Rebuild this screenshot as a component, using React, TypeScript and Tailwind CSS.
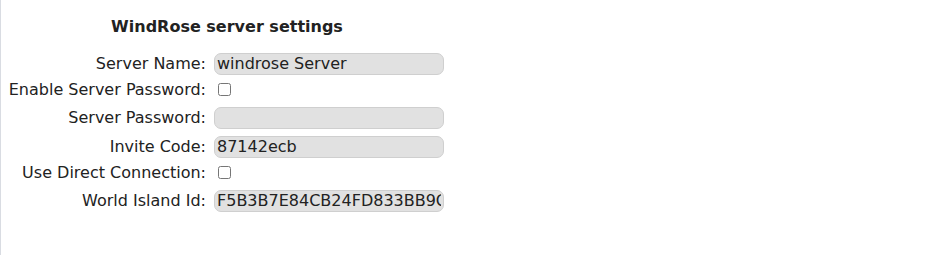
export default function App() {
  const rows: { label: string; type: 'text' | 'check'; value?: string }[] = [
    { label: 'Server Name:', type: 'text', value: 'windrose Server' },
    { label: 'Enable Server Password:', type: 'check' },
    { label: 'Server Password:', type: 'text', value: '' },
    { label: 'Invite Code:', type: 'text', value: '87142ecb' },
    { label: 'Use Direct Connection:', type: 'check' },
    { label: 'World Island Id:', type: 'text', value: 'F5B3B7E84CB24FD833BB9C0E1A2' },
  ]

  return (
    <div
      className="h-[255px] w-[940px] border-l border-[#d9dce2] bg-white text-[16px] text-[#222]"
      style={{ fontFamily: '"DejaVu Sans", sans-serif' }}
    >
      <div className="w-[444px] pt-[17px]">
        <h2 className="pl-[8px] text-center text-[16px] font-bold leading-[20px] text-[#222]">
          WindRose server settings
        </h2>
        <div className="mt-[12px] grid grid-cols-[205px_230px] gap-x-2">
          {rows.map((row) =>
            row.type === 'text' ? (
              <div key={row.label} className="contents">
                <label className="flex h-[29px] items-center justify-end whitespace-nowrap">
                  {row.label}
                </label>
                <div className="flex h-[29px] items-center">
                  <input
                    type="text"
                    readOnly
                    value={row.value}
                    className="h-[22px] w-[230px] rounded-[7px] border border-[#cfcfcf] bg-[#e1e1e1] px-[2px] text-[16px] leading-[20px] text-[#222] outline-none"
                    style={{ fontFamily: '"DejaVu Sans", sans-serif' }}
                  />
                </div>
              </div>
            ) : (
              <div key={row.label} className="contents">
                <label className="flex h-[25px] items-start justify-end whitespace-nowrap pt-[2px] leading-[19px]">
                  {row.label}
                </label>
                <div className="flex h-[25px] items-start">
                  <input type="checkbox" className="m-0 ml-[4px] mt-[5px] h-[13px] w-[13px]" />
                </div>
              </div>
            )
          )}
        </div>
      </div>
    </div>
  )
}
